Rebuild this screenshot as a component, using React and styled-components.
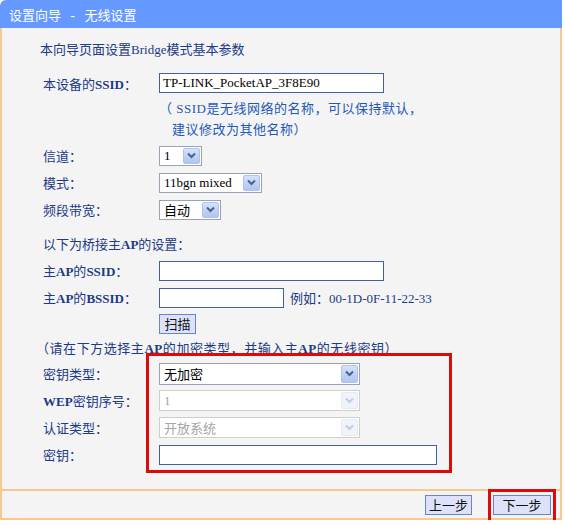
import styled, { createGlobalStyle } from "styled-components";

const GlobalStyle = createGlobalStyle`
  body {
    margin: 0;
    background: #ffffff;
    font-family: "Liberation Serif", "Noto Sans CJK SC", serif;
    font-size: 13px;
  }
`;

const Frame = styled.div`
  width: 562px;
  display: flex;
  flex-direction: column;
`;

const TitleBar = styled.div`
  height: 28px;
  background: #6699ff;
  color: #ffffff;
  border-top-left-radius: 6px;
  display: flex;
  align-items: center;
  padding-left: 9px;
  font-family: "Liberation Mono", "Noto Sans CJK SC", monospace;
  font-size: 13px;
  white-space: pre;
`;

const Panel = styled.div`
  height: 452px;
  background: #f4f4f4;
  border-left: 2px solid #f7c88f;
  border-right: 2px solid #f7c88f;
  padding: 9px 0 0 41px;
  display: flex;
  flex-direction: column;
  color: #1c3a85;
`;

// latin runs inside the chinese text
const Lat = styled.span`
  font-family: "Liberation Serif", serif;
  font-size: 13px;
  font-weight: ${({ bold }) => (bold ? 700 : 400)};
`;

const Line = styled.div`
  height: ${({ h }) => h || 22}px;
  line-height: ${({ h }) => (h || 22) + 3}px;
  margin-left: ${({ shift }) => shift || 0}px;
  margin-top: ${({ top }) => top || 0}px;
  letter-spacing: ${({ spread }) => spread || 0}px;
  white-space: nowrap;
`;

const Row = styled.div`
  height: ${({ h }) => h || 27}px;
  margin-top: ${({ top }) => top || 0}px;
  display: grid;
  grid-template-columns: 116px 1fr;
  align-items: center;
`;

const Label = styled.div`
  white-space: nowrap;
`;

const Control = styled.div`
  display: flex;
  align-items: center;
  gap: 6px;
`;

const Hint = styled.div`
  height: ${({ h }) => h || 22}px;
  line-height: ${({ h }) => (h || 22) + 4}px;
  margin-top: ${({ top }) => top || 0}px;
  padding-left: ${({ indent }) => 116 + (indent || 0)}px;
  letter-spacing: 0.5px;
  color: #2458b8;
  white-space: nowrap;
`;

const TextInput = styled.div`
  box-sizing: border-box;
  width: ${({ w }) => w}px;
  height: ${({ h }) => h || 20}px;
  background: #ffffff;
  border: 1px solid #41619e;
  display: flex;
  align-items: center;
  padding-left: 3px;
  color: #000000;
  white-space: nowrap;
`;

const SelectBox = styled.div`
  box-sizing: border-box;
  width: ${({ w }) => w}px;
  height: ${({ h }) => h || 20}px;
  background: #ffffff;
  border: 1px solid ${({ disabled }) => (disabled ? "#d0cfc4" : "#9aa3b3")};
  display: flex;
  align-items: stretch;
  padding: 1px;
  color: ${({ disabled }) => (disabled ? "#a6a6a6" : "#000000")};
`;

const SelectValue = styled.div`
  flex: 1;
  display: flex;
  align-items: center;
  padding-left: 3px;
  white-space: nowrap;
  overflow: hidden;
`;

const ArrowBox = styled.div`
  width: 17px;
  box-sizing: border-box;
  border: 1px solid ${({ disabled }) => (disabled ? "#e4eaf6" : "#aec2ec")};
  border-radius: 2px;
  background: ${({ disabled }) =>
    disabled
      ? "#eef3fc"
      : "linear-gradient(180deg, #d6e2fd 0%, #bccff7 60%, #afc5f3 100%)"};
  display: flex;
  align-items: center;
  justify-content: center;
`;

const Chevron = ({ disabled }) => (
  <svg width="9" height="7" viewBox="0 0 9 7">
    <polyline
      points="1,1.5 4.5,5 8,1.5"
      fill="none"
      stroke={disabled ? "#c3ccdc" : "#4d6185"}
      strokeWidth="2"
    />
  </svg>
);

const Select = ({ w, h, disabled, children }) => (
  <SelectBox w={w} h={h} disabled={disabled}>
    <SelectValue>{children}</SelectValue>
    <ArrowBox disabled={disabled}>
      <Chevron disabled={disabled} />
    </ArrowBox>
  </SelectBox>
);

const Button = styled.div`
  box-sizing: border-box;
  width: ${({ w }) => w}px;
  height: ${({ h }) => h || 20}px;
  background: #dde2fa;
  border: 1px solid #6d84c2;
  display: flex;
  align-items: center;
  justify-content: center;
  color: #111111;
  font-family: "Noto Sans CJK SC", sans-serif;
  font-size: 13px;
`;

const Example = styled.span`
  color: #1c3a85;
  white-space: nowrap;
`;

const Secure = styled.div`
  position: relative;
  margin-top: 2px;
`;

const Highlight = styled.div`
  position: absolute;
  pointer-events: none;
  box-sizing: border-box;
  border: 3px solid #dd0a0a;
  left: ${({ l }) => l}px;
  top: ${({ t }) => t}px;
  width: ${({ w }) => w}px;
  height: ${({ h }) => h}px;
`;

const Footer = styled.div`
  height: 27px;
  background: #f4f4f4;
  border: 2px solid #f7c88f;
  display: flex;
  justify-content: flex-end;
  align-items: center;
  gap: 21px;
  padding-right: 9px;
`;

const Mark = styled.div`
  position: relative;
`;

export default function App() {
  return (
    <>
      <GlobalStyle />
      <Frame>
        <TitleBar>设置向导 - 无线设置</TitleBar>
        <Panel>
          <Line shift={-3}>
            本向导页面设置<Lat>Bridge</Lat>模式基本参数
          </Line>

          <Row h={22} top={13}>
            <Label>
              本设备的<Lat bold>SSID</Lat>：
            </Label>
            <Control>
              <TextInput w={225}>
                <Lat>TP-LINK_PocketAP_3F8E90</Lat>
              </TextInput>
            </Control>
          </Row>
          <Hint top={2}>
            （<Lat> SSID</Lat>是无线网络的名称，可以保持默认，
          </Hint>
          <Hint h={20} indent={13}>
            建议修改为其他名称）
          </Hint>

          <Row top={4}>
            <Label>信道：</Label>
            <Control>
              <Select w={43}>
                <Lat>1</Lat>
              </Select>
            </Control>
          </Row>
          <Row>
            <Label>模式：</Label>
            <Control>
              <Select w={103}>
                <Lat>11bgn mixed</Lat>
              </Select>
            </Control>
          </Row>
          <Row>
            <Label>频段带宽：</Label>
            <Control>
              <Select w={62}>自动</Select>
            </Control>
          </Row>

          <Line top={7} h={27}>
            以下为桥接主<Lat bold>AP</Lat>的设置：
          </Line>
          <Row>
            <Label>
              主<Lat bold>AP</Lat>的<Lat bold>SSID</Lat>：
            </Label>
            <Control>
              <TextInput w={225} />
            </Control>
          </Row>
          <Row>
            <Label>
              主<Lat bold>AP</Lat>的<Lat bold>BSSID</Lat>：
            </Label>
            <Control>
              <TextInput w={125} />
              <Example>
                例如：<Lat>00-1D-0F-11-22-33</Lat>
              </Example>
            </Control>
          </Row>
          <Row h={25}>
            <Label />
            <Control>
              <Button w={37}>扫描</Button>
            </Control>
          </Row>
          <Line shift={-7} spread={0.55}>
            （请在下方选择主<Lat bold>AP</Lat>的加密类型，并输入主<Lat bold>AP</Lat>的无线密钥）
          </Line>

          <Secure>
            <Row>
              <Label>密钥类型：</Label>
              <Control>
                <Select w={201} h={22}>
                  无加密
                </Select>
              </Control>
            </Row>
            <Row>
              <Label>
                <Lat bold>WEP</Lat>密钥序号：
              </Label>
              <Control>
                <Select w={201} h={21} disabled>
                  <Lat>1</Lat>
                </Select>
              </Control>
            </Row>
            <Row>
              <Label>认证类型：</Label>
              <Control>
                <Select w={201} h={21} disabled>
                  开放系统
                </Select>
              </Control>
            </Row>
            <Row>
              <Label>密钥：</Label>
              <Control>
                <TextInput w={278} />
              </Control>
            </Row>
            <Highlight l={103} t={-7} w={306} h={120} />
          </Secure>
        </Panel>
        <Footer>
          <Button w={47}>上一步</Button>
          <Mark>
            <Button w={58}>下一步</Button>
            <Highlight l={-5} t={-6} w={68} h={34} />
          </Mark>
        </Footer>
      </Frame>
    </>
  );
}
